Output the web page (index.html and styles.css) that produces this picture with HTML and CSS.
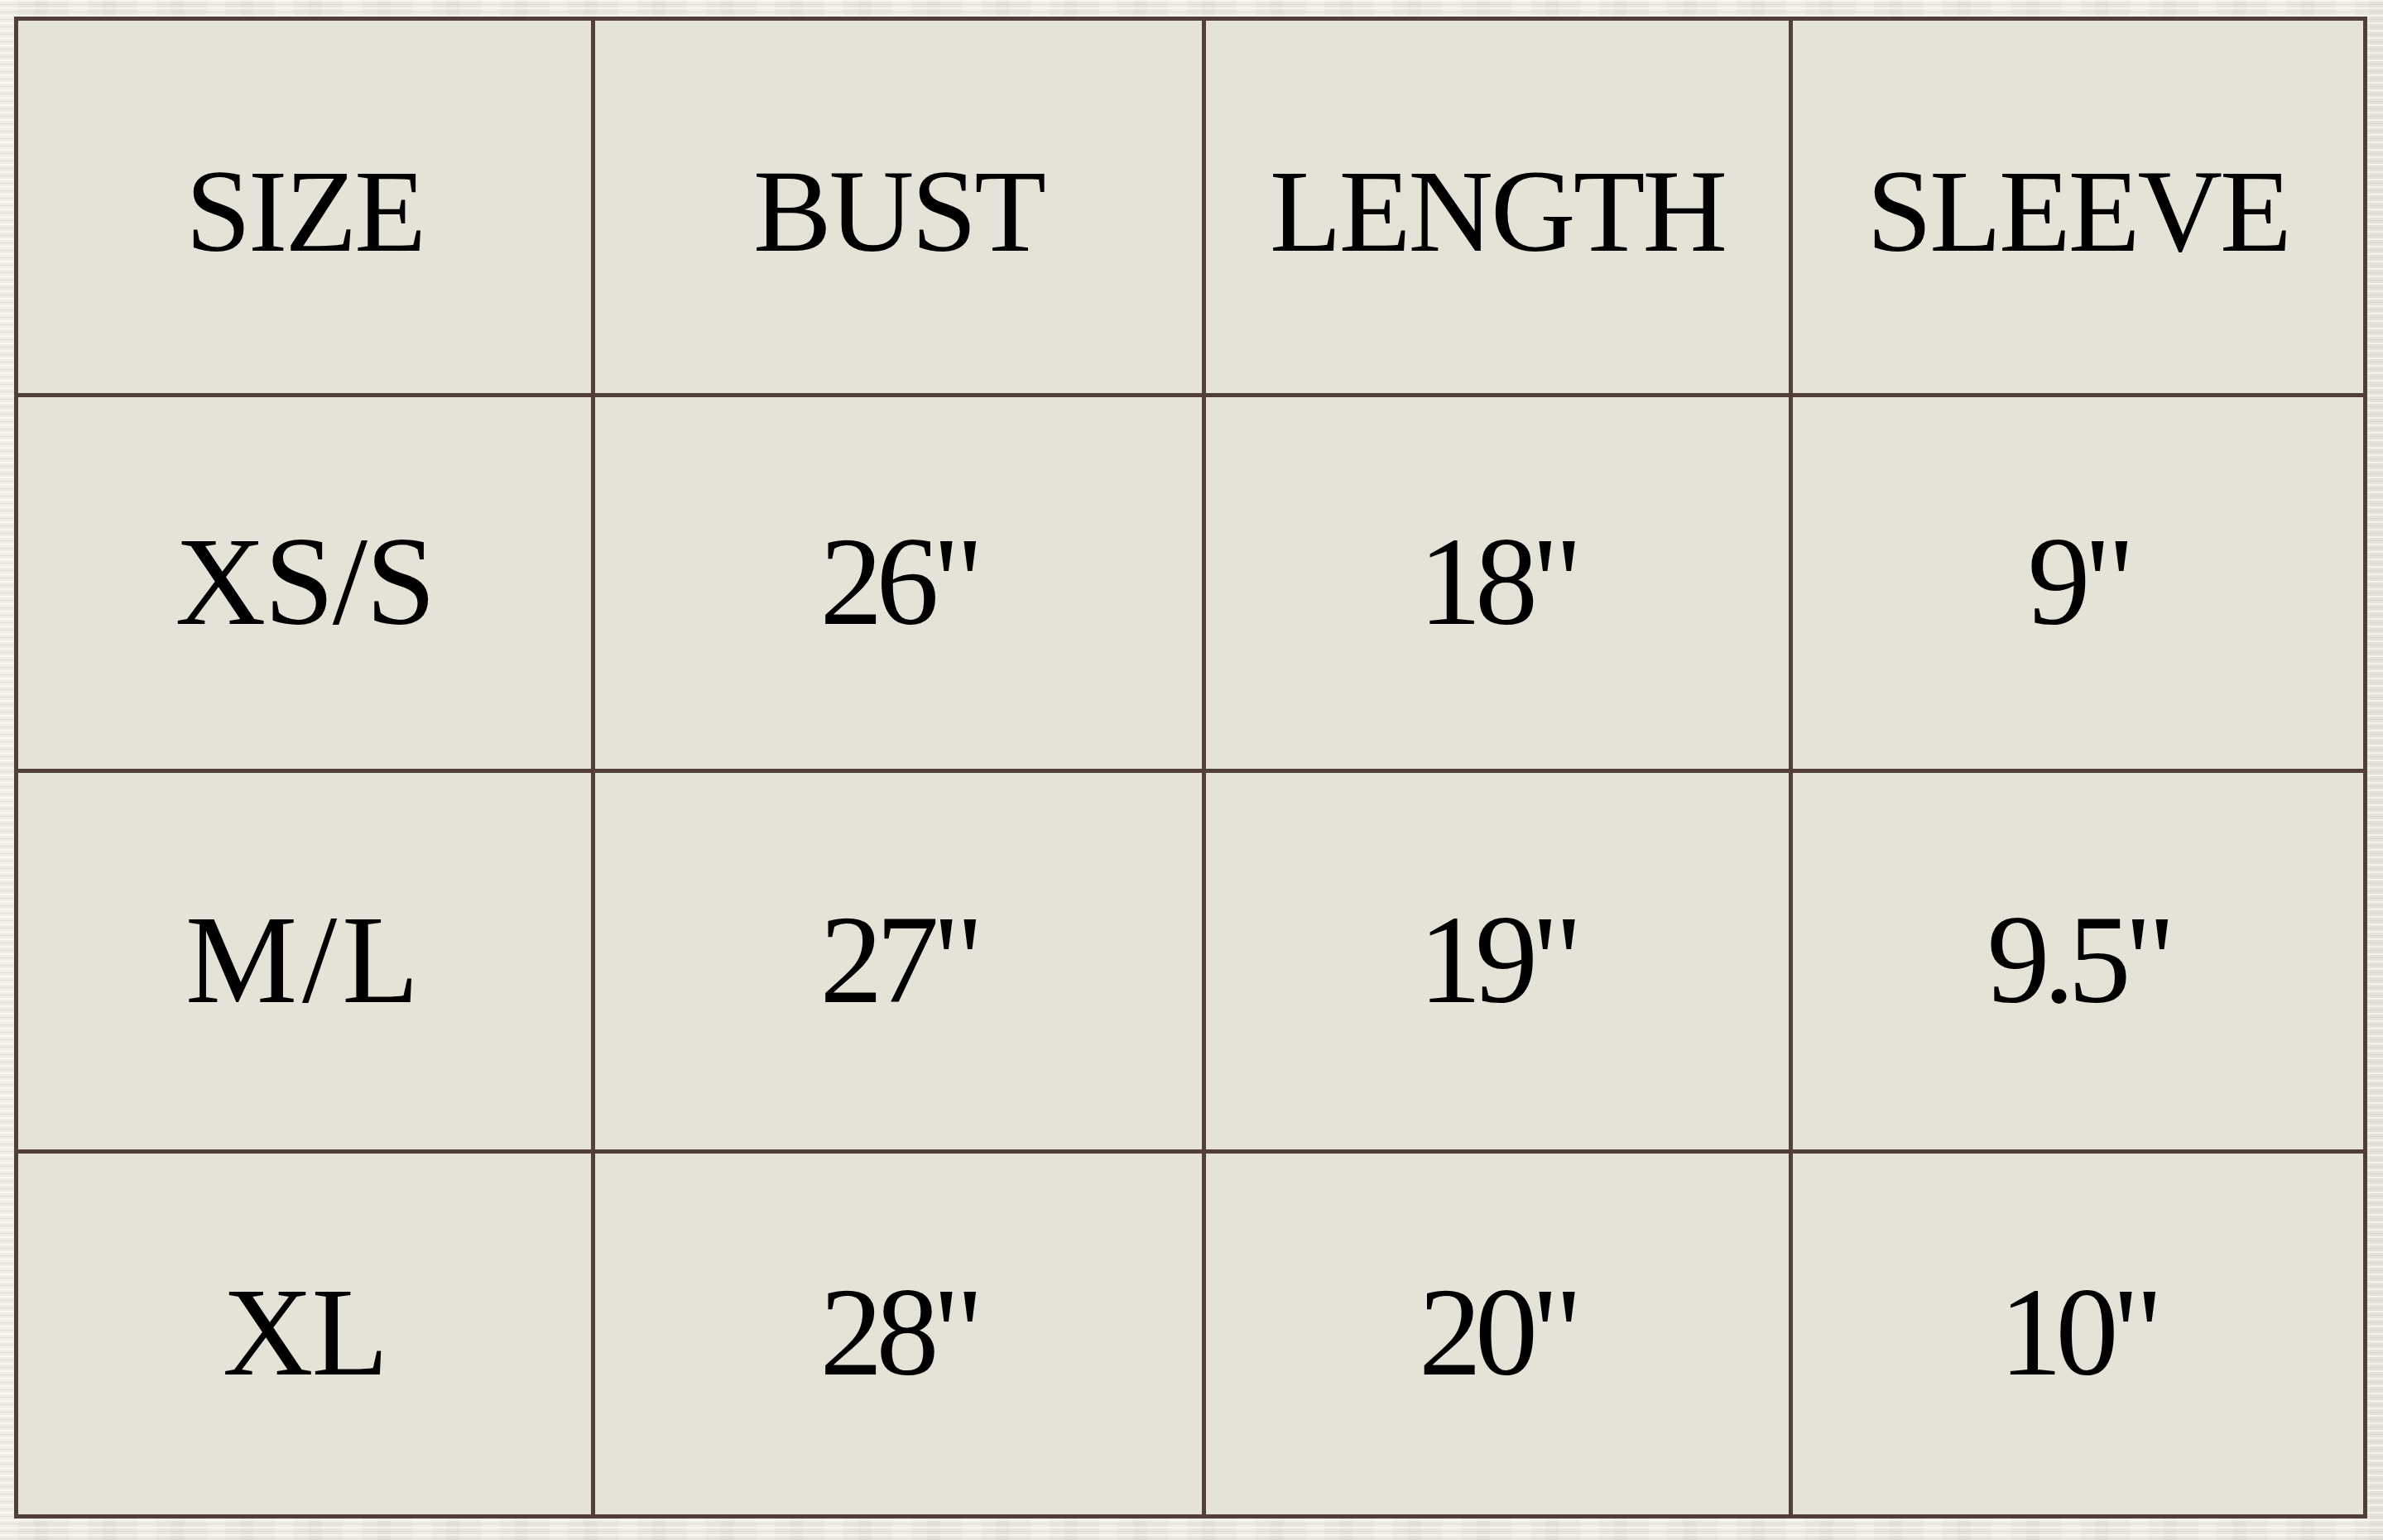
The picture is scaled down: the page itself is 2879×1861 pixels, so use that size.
FILE: index.html
```html
<!DOCTYPE html>
<html lang="en">
<head>
<meta charset="utf-8">
<title>Size Chart</title>
<link rel="stylesheet" href="styles.css">
</head>
<body>
<main class="page">
  <div class="chart">
    <div class="cell head">SIZE</div>
    <div class="cell head">BUST</div>
    <div class="cell head">LENGTH</div>
    <div class="cell head">SLEEVE</div>

    <div class="cell">XS/S</div>
    <div class="cell num">26"</div>
    <div class="cell num">18"</div>
    <div class="cell num">9"</div>

    <div class="cell wide">M/L</div>
    <div class="cell num">27"</div>
    <div class="cell num">19"</div>
    <div class="cell num">9.5"</div>

    <div class="cell">XL</div>
    <div class="cell num">28"</div>
    <div class="cell num">20"</div>
    <div class="cell num">10"</div>
  </div>
</main>
</body>
</html>
```

FILE: styles.css
```css
html, body {
  margin: 0;
  padding: 0;
}

body {
  width: 2879px;
  height: 1861px;
  overflow: hidden;
  background-color: #e9e7de;
  background-image:
    repeating-linear-gradient(180deg, rgba(255,255,250,0.55) 0px, rgba(255,255,250,0.55) 2px, transparent 2px, transparent 5px, rgba(200,198,188,0.35) 5px, rgba(200,198,188,0.35) 6px, transparent 6px, transparent 9px),
    repeating-linear-gradient(90deg, rgba(255,255,250,0.25) 0px, rgba(255,255,250,0.25) 23px, transparent 23px, transparent 41px, rgba(210,208,198,0.25) 41px, rgba(210,208,198,0.25) 57px, transparent 57px, transparent 83px);
  font-family: "Liberation Serif", "Times New Roman", serif;
  color: #000;
}

.page {
  padding: 20px 0 0 17px;
}

.chart {
  display: grid;
  grid-template-columns: 692px 733px 704px 689px;
  grid-template-rows: 450px 449px 455px 436px;
  gap: 5px;
  padding: 5px;
  width: max-content;
  background: #523f39;
}

.cell {
  background: #e5e3d8;
  display: flex;
  align-items: center;
  justify-content: center;
  font-size: 152px;
  line-height: 1;
  padding-bottom: 4px;
  letter-spacing: -2px;
}

.head {
  font-size: 142px;
  letter-spacing: -3px;
  padding-bottom: 0;
  padding-top: 10px;
}

.wide {
  letter-spacing: 6px;
}

.num {
  letter-spacing: -8px;
}
```
